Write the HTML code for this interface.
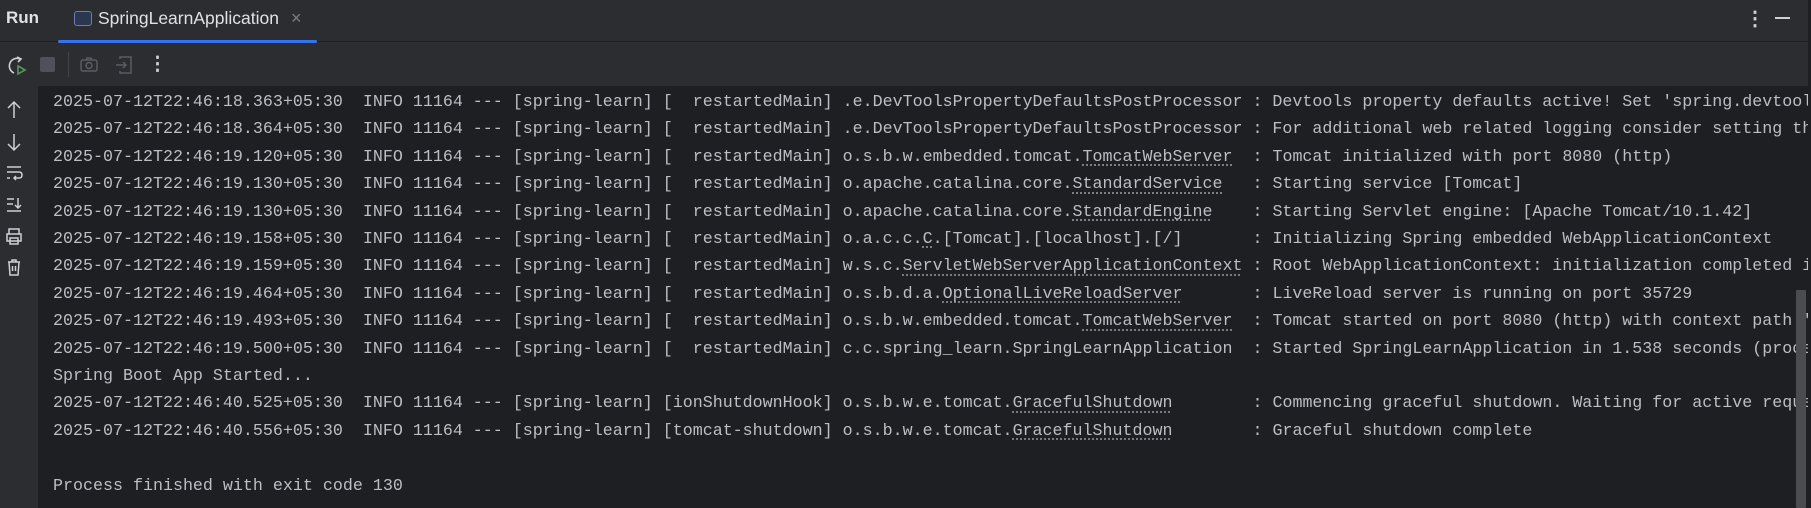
<!DOCTYPE html>
<html><head><meta charset="utf-8"><style>
*{margin:0;padding:0;box-sizing:border-box}
body{width:1811px;height:508px;background:#2b2d30;overflow:hidden;position:relative;font-family:"Liberation Sans",sans-serif}
.top{position:absolute;left:0;top:0;width:1808px;height:42px;border-bottom:1px solid #1e1f22}
.run{position:absolute;left:6px;top:8px;color:#dfe1e5;font-size:17px;font-weight:bold}
.tab{position:absolute;left:74px;top:8px;color:#dfe1e5;font-size:17.5px}
.tabicon{position:absolute;left:74px;top:11px;width:18px;height:15px;border:1.5px solid #6b7fb3;border-radius:3px;background:#2b3650}
.uline{position:absolute;left:58px;top:40px;width:259px;height:3px;background:#3574f0;border-radius:2px}
.tool{position:absolute;left:0;top:43px;width:1808px;height:43px}
.gut{position:absolute;left:0;top:86px;width:38px;height:422px;background:#2b2d30}
.con{position:absolute;left:38px;top:86px;width:1770px;height:422px;background:#1e1f22;overflow:hidden}
.rb{position:absolute;left:1808px;top:0;width:3px;height:508px;background:#1e1f22}
pre{position:absolute;left:15px;top:0px;font-family:"Liberation Mono",monospace;font-size:16.66px;line-height:27.4px;color:#bcbec4;white-space:pre}
u{text-decoration:underline dotted #8a8c92;text-underline-offset:4px}
.sb{position:absolute;left:1758px;top:204px;width:10px;height:218px;background:#4a4c50;border-radius:1px}
svg{position:absolute}
</style></head><body>
<div class="top">
<div class="run">Run</div>
<div class="tabicon"></div>
<div class="tab" style="left:98px">SpringLearnApplication</div>
<div style="position:absolute;left:291px;top:8px;color:#7d7f84;font-size:18px">×</div>
<div class="uline"></div>
<div style="position:absolute;left:1745px;top:6px;color:#ced0d6;font-size:20px;font-weight:bold">⋮</div>
<div style="position:absolute;left:1775px;top:17px;width:15px;height:2px;background:#ced0d6"></div>
</div>
<div class="tool"></div>
<svg style="left:6px;top:55px" width="22" height="22" viewBox="0 0 22 22"><path d="M14 4 A7 7 0 1 0 8 18" fill="none" stroke="#ced0d6" stroke-width="1.6"/><path d="M11 2 L15 4 L12 7" fill="none" stroke="#ced0d6" stroke-width="1.6"/><path d="M12 11 L19 15 L12 19 Z" fill="none" stroke="#57965c" stroke-width="1.6"/></svg>
<div style="position:absolute;left:40px;top:57px;width:15px;height:15px;background:#4e5157;border-radius:2px"></div>
<div style="position:absolute;left:68px;top:52px;width:1px;height:25px;background:#43454a"></div>
<svg style="left:79px;top:56px" width="20" height="18" viewBox="0 0 20 18"><rect x="2" y="4" width="16" height="11" rx="2" fill="none" stroke="#5a5d63" stroke-width="1.5"/><circle cx="10" cy="9.5" r="3" fill="none" stroke="#5a5d63" stroke-width="1.5"/><path d="M7 4 L8 2 H12 L13 4" fill="none" stroke="#5a5d63" stroke-width="1.5"/></svg>
<svg style="left:114px;top:55px" width="20" height="20" viewBox="0 0 20 20"><path d="M6 4 V2 H17 V18 H6 V16" fill="none" stroke="#5a5d63" stroke-width="1.5"/><path d="M2 10 H12 M9 7 L12 10 L9 13" fill="none" stroke="#5a5d63" stroke-width="1.5"/></svg>
<div style="position:absolute;left:148px;top:53px;color:#ced0d6;font-size:19px;font-weight:bold">⋮</div>
<div class="gut"></div>
<svg style="left:5px;top:100px" width="18" height="200" viewBox="0 0 18 200" fill="none" stroke="#ced0d6" stroke-width="1.5">
<path d="M9 2 V18 M3 8 L9 2 L15 8"/>
<path d="M9 34 V50 M3 44 L9 50 L15 44"/>
<path d="M2 67 H16 M2 72 H14 Q17 72 17 75 Q17 78 14 78 H9 M11 76 L9 78 L11 80 M2 78 H5"/>
<path d="M2 99 H9 M2 104 H8 M2 111 H16 M13 98 V108 M10 105 L13 108 L16 105"/>
<path d="M4 134 V129 H14 V134 M2 134 H16 V141 H2 Z M5 138 H13 V144 H5 Z"/>
<path d="M3 162 H15 M7 162 V160 H11 V162 M4 162 L5 175 H13 L14 162 M7.5 166 V171 M10.5 166 V171"/>
</svg>
<div class="con">
<pre style="top:3px">2025-07-12T22:46:18.363+05:30  INFO 11164 --- [spring-learn] [  restartedMain] .e.DevToolsPropertyDefaultsPostProcessor : Devtools property defaults active! Set 'spring.devtools.add-properties' to 'false' to disable
2025-07-12T22:46:18.364+05:30  INFO 11164 --- [spring-learn] [  restartedMain] .e.DevToolsPropertyDefaultsPostProcessor : For additional web related logging consider setting the 'logging.level.web' property
2025-07-12T22:46:19.120+05:30  INFO 11164 --- [spring-learn] [  restartedMain] o.s.b.w.embedded.tomcat.<u>TomcatWebServer</u>  : Tomcat initialized with port 8080 (http)
2025-07-12T22:46:19.130+05:30  INFO 11164 --- [spring-learn] [  restartedMain] o.apache.catalina.core.<u>StandardService</u>   : Starting service [Tomcat]
2025-07-12T22:46:19.130+05:30  INFO 11164 --- [spring-learn] [  restartedMain] o.apache.catalina.core.<u>StandardEngine</u>    : Starting Servlet engine: [Apache Tomcat/10.1.42]
2025-07-12T22:46:19.158+05:30  INFO 11164 --- [spring-learn] [  restartedMain] o.a.c.c.<u>C</u>.[Tomcat].[localhost].[/]       : Initializing Spring embedded WebApplicationContext
2025-07-12T22:46:19.159+05:30  INFO 11164 --- [spring-learn] [  restartedMain] w.s.c.<u>ServletWebServerApplicationContext</u> : Root WebApplicationContext: initialization completed in 1100 ms
2025-07-12T22:46:19.464+05:30  INFO 11164 --- [spring-learn] [  restartedMain] o.s.b.d.a.<u>OptionalLiveReloadServer</u>       : LiveReload server is running on port 35729
2025-07-12T22:46:19.493+05:30  INFO 11164 --- [spring-learn] [  restartedMain] o.s.b.w.embedded.tomcat.<u>TomcatWebServer</u>  : Tomcat started on port 8080 (http) with context path '/'
2025-07-12T22:46:19.500+05:30  INFO 11164 --- [spring-learn] [  restartedMain] c.c.spring_learn.SpringLearnApplication  : Started SpringLearnApplication in 1.538 seconds (process running for 2.1)
Spring Boot App Started...
2025-07-12T22:46:40.525+05:30  INFO 11164 --- [spring-learn] [ionShutdownHook] o.s.b.w.e.tomcat.<u>GracefulShutdown</u>        : Commencing graceful shutdown. Waiting for active requests to complete
2025-07-12T22:46:40.556+05:30  INFO 11164 --- [spring-learn] [tomcat-shutdown] o.s.b.w.e.tomcat.<u>GracefulShutdown</u>        : Graceful shutdown complete

Process finished with exit code 130</pre>
<div class="sb"></div>
</div>
<div class="rb"></div>
</body></html>
